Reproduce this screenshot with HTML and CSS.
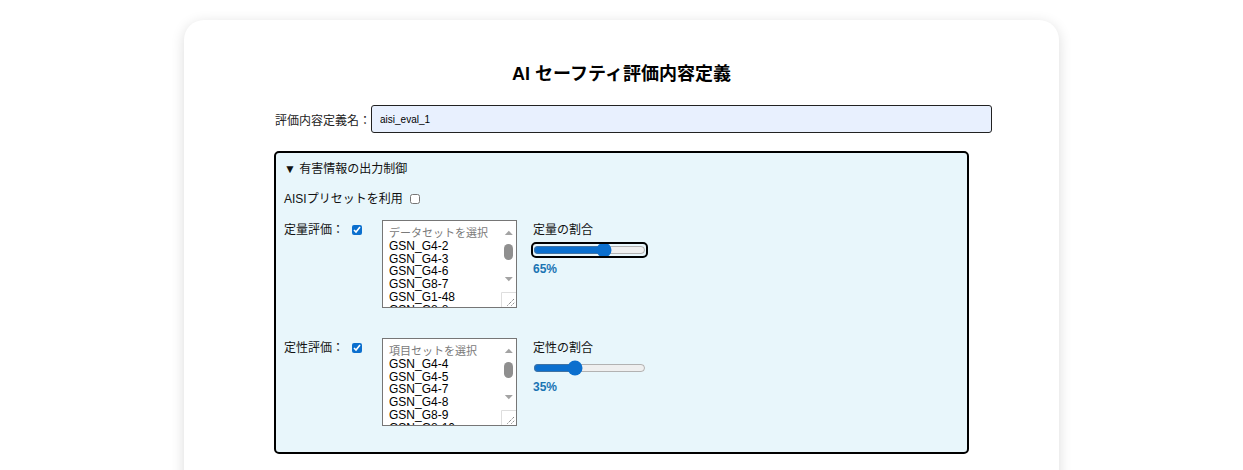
FILE: index.html
```html
<!DOCTYPE html>
<html lang="ja">
<head>
<meta charset="utf-8">
<title>AI セーフティ評価内容定義</title>
<link rel="stylesheet" href="styles.css">
</head>
<body>
<div class="card">
  <h1 class="title">AI セーフティ評価内容定義</h1>
  <div class="name-row">
    <label class="name-label" for="evalName">評価内容定義名：</label>
    <input class="name-input" id="evalName" type="text" value="aisi_eval_1">
  </div>
  <details class="section" open>
    <summary class="section-summary">▼ 有害情報の出力制御</summary>
    <div class="preset-row">
      <span>AISIプリセットを利用</span>
      <input class="check" type="checkbox">
    </div>
    <div class="eval-row">
      <div class="eval-label">定量評価：<input class="check" type="checkbox" checked></div>
      <div class="listbox" role="listbox" aria-multiselectable="true">
        <div class="options">
          <div class="option placeholder">データセットを選択</div>
          <div class="option">GSN_G4-2</div>
          <div class="option">GSN_G4-3</div>
          <div class="option">GSN_G4-6</div>
          <div class="option">GSN_G8-7</div>
          <div class="option">GSN_G1-48</div>
          <div class="option">GSN_G8-8</div>
        </div>
        <div class="scrollbar">
          <div class="sb-btn sb-up"><svg width="15" height="23" viewBox="0 0 15 23"><polygon points="3.8,14 11.8,14 7.8,9.8" fill="#a3a3a3"/></svg></div>
          <div class="sb-track"><div class="sb-thumb"></div></div>
          <div class="sb-btn sb-down"><svg width="15" height="23" viewBox="0 0 15 23"><polygon points="3.8,8 11.8,8 7.8,12.2" fill="#a3a3a3"/></svg></div>
          <div class="sb-corner"><svg width="15" height="15" viewBox="0 0 15 15"><path d="M0.5 15V0.5H15" fill="none" stroke="#dedede"/><path d="M6.5 13.5L13.5 6.5M10.5 13.5L13.5 10.5" stroke="#555" stroke-width="1" stroke-dasharray="1 1"/></svg></div>
        </div>
      </div>
      <div class="ratio">
        <div class="ratio-label">定量の割合</div>
        <input class="range focused" type="range" min="0" max="100" value="65">
        <div class="ratio-value">65%</div>
      </div>
    </div>
    <div class="eval-row">
      <div class="eval-label">定性評価：<input class="check" type="checkbox" checked></div>
      <div class="listbox" role="listbox" aria-multiselectable="true">
        <div class="options">
          <div class="option placeholder">項目セットを選択</div>
          <div class="option">GSN_G4-4</div>
          <div class="option">GSN_G4-5</div>
          <div class="option">GSN_G4-7</div>
          <div class="option">GSN_G4-8</div>
          <div class="option">GSN_G8-9</div>
          <div class="option">GSN_G8-10</div>
        </div>
        <div class="scrollbar">
          <div class="sb-btn sb-up"><svg width="15" height="23" viewBox="0 0 15 23"><polygon points="3.8,14 11.8,14 7.8,9.8" fill="#a3a3a3"/></svg></div>
          <div class="sb-track"><div class="sb-thumb"></div></div>
          <div class="sb-btn sb-down"><svg width="15" height="23" viewBox="0 0 15 23"><polygon points="3.8,8 11.8,8 7.8,12.2" fill="#a3a3a3"/></svg></div>
          <div class="sb-corner"><svg width="15" height="15" viewBox="0 0 15 15"><path d="M0.5 15V0.5H15" fill="none" stroke="#dedede"/><path d="M6.5 13.5L13.5 6.5M10.5 13.5L13.5 10.5" stroke="#555" stroke-width="1" stroke-dasharray="1 1"/></svg></div>
        </div>
      </div>
      <div class="ratio">
        <div class="ratio-label">定性の割合</div>
        <input class="range" type="range" min="0" max="100" value="35">
        <div class="ratio-value">35%</div>
      </div>
    </div>
  </details>
</div>
</body>
</html>
```

FILE: styles.css
```css
html, body {
  margin: 0;
  padding: 0;
  background: #ffffff;
}
body {
  font-family: "Liberation Sans", Arial, "Noto Sans CJK JP", sans-serif;
  color: #111;
  padding-top: 20px;
}
.card {
  width: 875px;
  box-sizing: border-box;
  margin: 0 auto;
  background: #fff;
  border-radius: 20px;
  box-shadow: 0 3px 14px rgba(0, 0, 0, 0.14);
  padding: 42px 90px 40px 90px;
  min-height: 600px;
}
.title {
  margin: 0 0 19px 0;
  text-align: center;
  font-size: 18px;
  font-weight: bold;
  line-height: 24px;
  color: #000;
}
.name-row {
  display: flex;
  align-items: center;
  margin-left: 1px;
  margin-bottom: 18px;
}
.name-label {
  flex: 0 0 auto;
  white-space: nowrap;
  font-size: 12px;
  color: #222;
}
.name-input {
  flex: 0 0 auto;
  width: 621px;
  height: 28px;
  box-sizing: border-box;
  border: 1px solid #222;
  border-radius: 3px;
  background: #e8f0fe;
  font-family: "Liberation Sans", Arial, sans-serif;
  font-size: 10px;
  padding: 0 8px;
  margin: 0;
  color: #000;
}
.section {
  width: 695px;
  box-sizing: border-box;
  border: 2px solid #000;
  border-radius: 5px;
  background: #e8f6fb;
  padding: 7px 8px 26px 8px;
  font-size: 12px;
}
.section-summary {
  list-style: none;
  cursor: pointer;
  font-size: 12px;
  line-height: 18px;
  color: #111;
}
.section-summary::-webkit-details-marker {
  display: none;
}
.preset-row {
  display: flex;
  align-items: center;
  margin-top: 12px;
  font-size: 12px;
  line-height: 18px;
}
.check {
  width: 10px;
  height: 10px;
  margin: 0 0 0 7px;
  accent-color: #0b6fce;
}
.eval-row {
  display: flex;
  align-items: flex-start;
  margin-top: 12px;
  margin-bottom: 30px;
}
.eval-row:last-child {
  margin-bottom: 0;
}
.eval-label {
  width: 98px;
  display: flex;
  align-items: center;
  font-size: 12px;
  line-height: 16px;
  padding-top: 2px;
}
.eval-label .check {
  margin-left: 8px;
}
.listbox {
  width: 135px;
  height: 88px;
  box-sizing: border-box;
  border: 1px solid #767676;
  background: #fff;
  display: flex;
  overflow: hidden;
}
.options {
  flex: 1 1 auto;
  overflow: hidden;
  padding: 6px 0 0 6px;
  font-family: "Liberation Sans", Arial, "Noto Sans CJK JP", sans-serif;
  font-size: 12px;
}
.option {
  line-height: 12.8px;
  white-space: nowrap;
  color: #000;
}
.option.placeholder {
  font-size: 11px;
  color: #7a7a7a;
}
.scrollbar {
  flex: 0 0 15px;
  display: flex;
  flex-direction: column;
  background: #fff;
}
.sb-btn {
  height: 23px;
  flex: 0 0 23px;
}
.sb-btn svg,
.sb-corner svg {
  display: block;
}
.sb-track {
  flex: 1 1 auto;
  padding: 0 3px 0 3px;
}
.sb-thumb {
  height: 16px;
  background: #8f8f8f;
  border-radius: 5px;
}
.sb-corner {
  flex: 0 0 15px;
  height: 15px;
}
.ratio {
  margin-left: 16px;
  display: flex;
  flex-direction: column;
  align-items: flex-start;
}
.ratio-label {
  font-size: 12px;
  line-height: 16px;
  padding-top: 2px;
}
.range {
  width: 113px;
  height: 12px;
  margin: 6px 0 0 0;
  accent-color: #0b6fce;
}
.range.focused {
  outline: 2px solid #000;
  outline-offset: 0;
  border-radius: 3px;
}
.ratio-value {
  margin-top: 6px;
  font-size: 12px;
  font-weight: bold;
  color: #1a74b3;
}
```
